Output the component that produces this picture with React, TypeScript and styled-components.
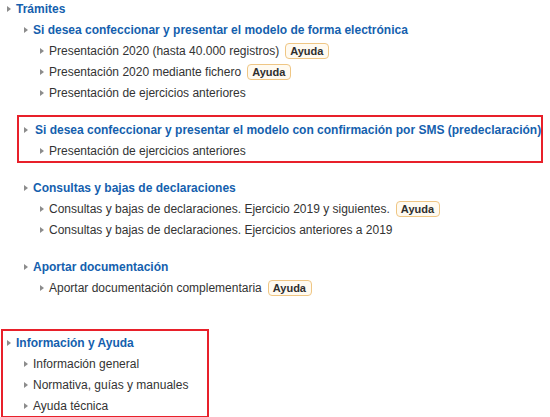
import React from "react";
import styled, { createGlobalStyle } from "styled-components";

const Global = createGlobalStyle`
  html, body { margin: 0; padding: 0; background: #fff; overflow: hidden; }
  body { font-family: "Liberation Sans", Arial, sans-serif; }
`;

const Page = styled.div`
  margin-top: -2px;
  padding-left: 7px;
  width: 550px;
  box-sizing: border-box;
`;

const List = styled.ul<{ $indent?: number }>`
  list-style: none;
  margin: 0;
  padding: 0 0 0 ${(p) => p.$indent ?? 0}px;
`;

const Section = styled.li<{ $gap?: number; $boxed?: boolean }>`
  margin-top: ${(p) => p.$gap ?? 0}px;
  ${(p) =>
    p.$boxed
      ? `border: 2px solid #e8202a; margin-left: -7px; margin-right: 7px; padding: 2px 0 0 5px;`
      : ""}
`;

const Row = styled.div`
  display: flex;
  align-items: center;
  height: 21px;
  white-space: nowrap;
`;

const Arrow = styled.span`
  display: inline-block;
  width: 0;
  height: 0;
  border-top: 3.5px solid transparent;
  border-bottom: 3.5px solid transparent;
  border-left: 4px solid #8c8c8c;
  margin-right: 5px;
  flex: none;
`;

const Title = styled.a<{ $extra?: number }>`
  color: #155fae;
  font-weight: bold;
  font-size: 12px;
  text-decoration: none;
  margin-left: ${(p) => p.$extra ?? 0}px;
`;

const Item = styled.span`
  color: #333;
  font-size: 12px;
`;

const Badge = styled.span`
  display: inline-block;
  margin-left: 6px;
  padding: 1px 5px 0 4px;
  border: 1px solid #efc684;
  border-radius: 4px;
  background: #fffaf0;
  color: #2e2e2e;
  font-size: 11px;
  font-weight: bold;
  line-height: 13px;
`;

const InfoBox = styled.li`
  margin: 31px 0 0 -6px;
  border: 2px solid #e8202a;
  width: 208px;
  box-sizing: border-box;
  padding: 1px 0 0 4px;
`;

type Leaf = { text: string; help?: boolean };
type Group = { title: string; items: Leaf[]; gap: number; boxed?: boolean };

const groups: Group[] = [
  {
    title: "Si desea confeccionar y presentar el modelo de forma electrónica",
    gap: 0,
    items: [
      { text: "Presentación 2020 (hasta 40.000 registros)", help: true },
      { text: "Presentación 2020 mediante fichero", help: true },
      { text: "Presentación de ejercicios anteriores" },
    ],
  },
  {
    title:
      "Si desea confeccionar y presentar el modelo con confirmación por SMS (predeclaración)",
    gap: 12,
    boxed: true,
    items: [{ text: "Presentación de ejercicios anteriores" }],
  },
  {
    title: "Consultas y bajas de declaraciones",
    gap: 14,
    items: [
      { text: "Consultas y bajas de declaraciones. Ejercicio 2019 y siguientes.", help: true },
      { text: "Consultas y bajas de declaraciones. Ejercicios anteriores a 2019" },
    ],
  },
  {
    title: "Aportar documentación",
    gap: 16,
    items: [{ text: "Aportar documentación complementaria", help: true }],
  },
];

const info: Leaf[] = [
  { text: "Información general" },
  { text: "Normativa, guías y manuales" },
  { text: "Ayuda técnica" },
];

export default function App() {
  return (
    <Page>
      <Global />
      <List>
        <li>
          <Row>
            <Arrow />
            <Title href="#">Trámites</Title>
          </Row>
          <List $indent={17}>
            {groups.map((g) => (
              <Section key={g.title} $gap={g.gap} $boxed={g.boxed}>
                <Row>
                  <Arrow />
                  <Title href="#" $extra={g.boxed ? 2 : 0}>
                    {g.title}
                  </Title>
                </Row>
                <List $indent={16}>
                  {g.items.map((it) => (
                    <li key={it.text}>
                      <Row>
                        <Arrow />
                        <Item>{it.text}</Item>
                        {it.help && <Badge>Ayuda</Badge>}
                      </Row>
                    </li>
                  ))}
                </List>
              </Section>
            ))}
          </List>
        </li>
        <InfoBox>
          <Row>
            <Arrow />
            <Title href="#">Información y Ayuda</Title>
          </Row>
          <List $indent={17}>
            {info.map((it) => (
              <li key={it.text}>
                <Row>
                  <Arrow />
                  <Item>{it.text}</Item>
                </Row>
              </li>
            ))}
          </List>
        </InfoBox>
      </List>
    </Page>
  );
}
